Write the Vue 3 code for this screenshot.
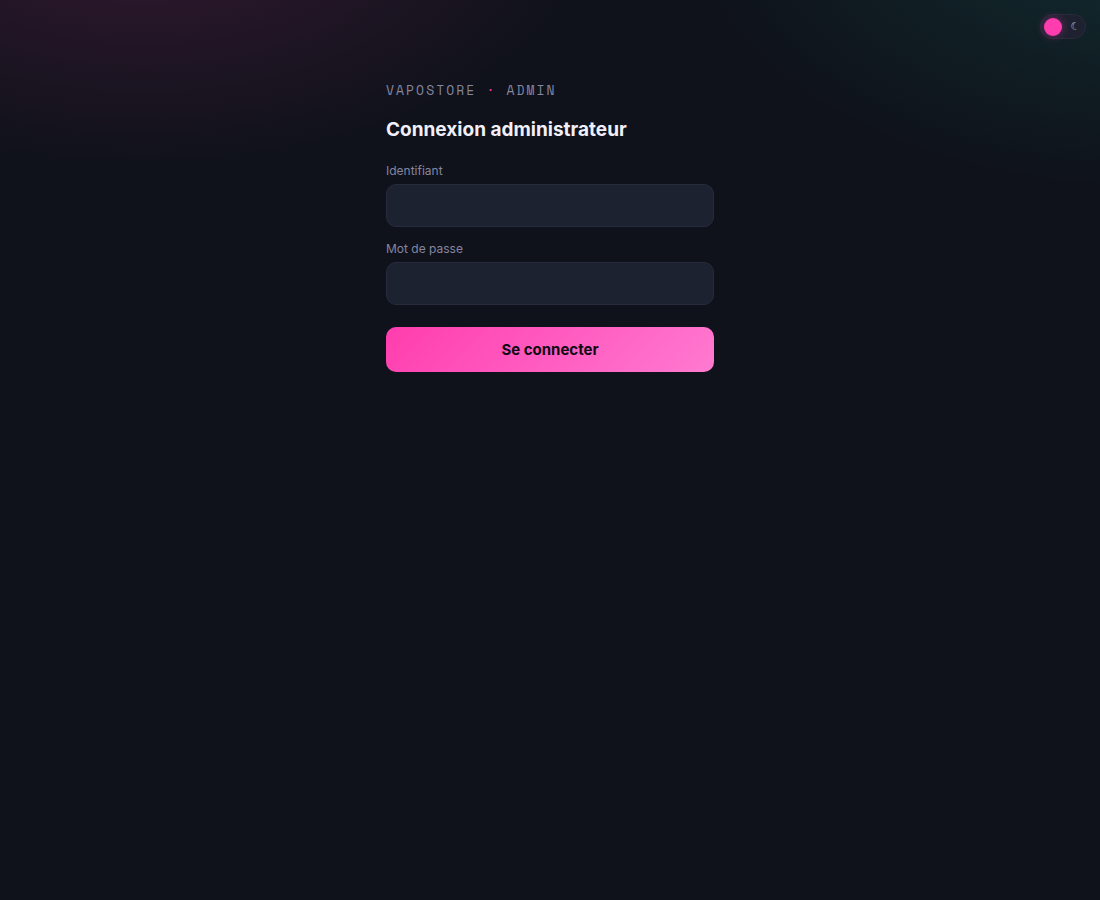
<script setup>
import { ref } from 'vue'

const username = ref('')
const password = ref('')
const light = ref(false)
</script>

<template>
  <div class="page">
    <label class="theme">
      <input v-model="light" type="checkbox" role="switch" aria-label="Changer de thème" />
      <span class="knob"></span>
      <span class="moon" aria-hidden="true">☾</span>
    </label>
    <main class="login">
      <p class="brand">VAPOSTORE <span class="dot">·</span> ADMIN</p>
      <h1>Connexion administrateur</h1>
      <form @submit.prevent>
        <label class="caption" for="username">Identifiant</label>
        <input id="username" v-model="username" class="field" type="text" autocomplete="username" />
        <label class="caption" for="password">Mot de passe</label>
        <input id="password" v-model="password" class="field" type="password" autocomplete="current-password" />
        <button class="submit" type="submit">Se connecter</button>
      </form>
    </main>
  </div>
</template>

<style>
body {
  margin: 0;
  background: #0f121a;
}
</style>

<style scoped>
.page {
  box-sizing: border-box;
  min-height: 100vh;
  padding: 80px 16px 32px;
  color: #f1effa;
  font-family: Inter, "Liberation Sans", sans-serif;
  background:
    radial-gradient(460px 260px at 13% -90px, rgba(255, 61, 174, 0.16), transparent),
    radial-gradient(470px 280px at 105% -90px, rgba(34, 225, 197, 0.14), transparent),
    #0f121a;
}

.theme {
  position: absolute;
  top: 14px;
  right: 14px;
  box-sizing: border-box;
  display: flex;
  align-items: center;
  justify-content: space-between;
  width: 46px;
  height: 25px;
  padding: 0 5px 0 3px;
  border: 1px solid #2a2a3c;
  border-radius: 13px;
  background: #1d2130;
  cursor: pointer;
}

.theme input {
  position: absolute;
  inset: 0;
  margin: 0;
  opacity: 0;
  cursor: pointer;
}

.knob {
  width: 18px;
  height: 18px;
  border-radius: 50%;
  background: #ff3dae;
  box-shadow: 0 0 10px rgba(255, 61, 174, 0.4);
}

.moon {
  color: #b4b9cc;
  font-family: "DejaVu Sans", sans-serif;
  font-size: 11px;
  font-weight: 700;
  line-height: 12px;
}

.login {
  max-width: 328px;
  margin: 0 auto;
}

.brand {
  margin: 0 0 17px;
  color: #8586a0;
  font-family: "Space Mono", "Liberation Mono", monospace;
  font-size: 13px;
  line-height: 20px;
  letter-spacing: 0.16em;
  white-space: nowrap;
}

.dot {
  color: #ff3dae;
}

h1 {
  margin: 0 0 20px;
  font-size: 19px;
  font-weight: 700;
  line-height: 25px;
}

form {
  display: flex;
  flex-direction: column;
}

.caption {
  margin-bottom: 4px;
  color: #8586a0;
  font-size: 12px;
  line-height: 18px;
}

.field {
  box-sizing: border-box;
  width: 100%;
  height: 43px;
  margin: 0 0 13px;
  padding: 0 14px;
  border: 1px solid #272b3d;
  border-radius: 10px;
  outline: none;
  background: #1d2230;
  color: inherit;
  font: inherit;
  font-size: 15px;
}

.field:focus-visible {
  border-color: #ff3dae;
}

.submit {
  height: 45px;
  margin-top: 9px;
  padding: 0 16px;
  border: 0;
  border-radius: 10px;
  background: linear-gradient(135deg, #ff3dae, #ff7ad1);
  color: #0f0a14;
  font: inherit;
  font-size: 15px;
  font-weight: 700;
  cursor: pointer;
}
</style>
